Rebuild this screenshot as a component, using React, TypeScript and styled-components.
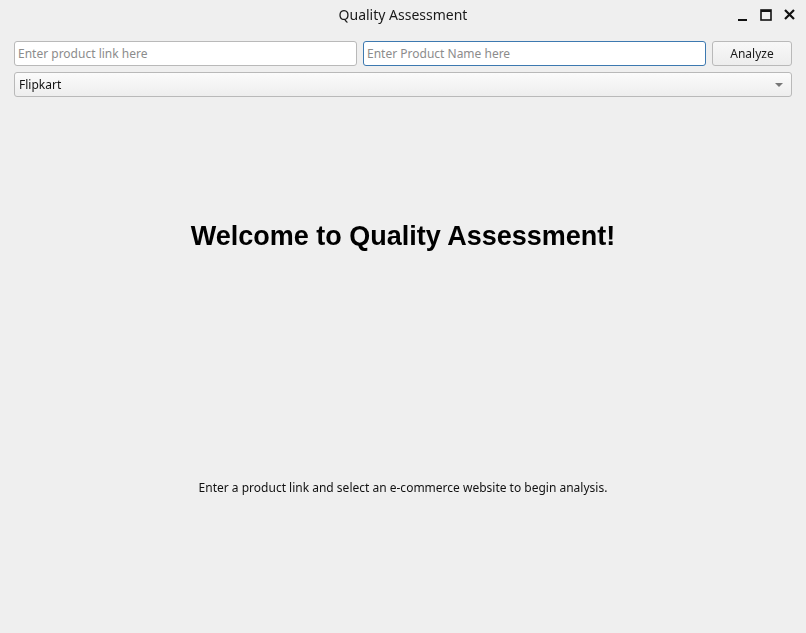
import React from "react";
import styled, { createGlobalStyle } from "styled-components";

const Global = createGlobalStyle`
  html, body { margin: 0; padding: 0; background: #efefef; }
  body { font-family: "Noto Sans", "Open Sans", sans-serif; }
  * { box-sizing: border-box; }
`;

const Window = styled.div`
  width: 806px;
  height: 633px;
  background: #efefef;
  display: flex;
  flex-direction: column;
  overflow: hidden;
`;

const TitleBar = styled.div`
  height: 30px;
  padding-bottom: 2px;
  display: flex;
  align-items: center;
  justify-content: center;
  position: relative;
  color: #1a1a1a;
  font-size: 14px;
`;

const Controls = styled.div`
  position: absolute;
  right: 10px;
  top: 8px;
  display: flex;
  gap: 11px;
  align-items: center;
`;

const Form = styled.div`
  padding: 11px 14px 0 14px;
  display: flex;
  flex-direction: column;
  gap: 6px;
`;

const Row = styled.div`
  display: flex;
  gap: 6px;
`;

const Input = styled.input<{ $focused?: boolean }>`
  flex: 1;
  min-width: 0;
  height: 25px;
  border: 1px solid ${(p) => (p.$focused ? "#3d79b0" : "#b9b9b9")};
  border-radius: 3px;
  background: #fff;
  font-family: "Noto Sans", sans-serif;
  font-size: 12px;
  padding: 0 3px;
  color: #222;
  outline: none;
  caret-color: #000;
  &::placeholder { color: #8c8c8c; }
`;

const Button = styled.button`
  width: 80px;
  height: 25px;
  border: 1px solid #b9b9b9;
  border-radius: 3px;
  background: linear-gradient(#f8f8f8, #ededed);
  font-family: "Noto Sans", sans-serif;
  font-size: 12px;
  color: #1a1a1a;
  padding: 0;
`;

const Combo = styled.div`
  height: 25px;
  border: 1px solid #b9b9b9;
  border-radius: 3px;
  background: linear-gradient(#fbfbfb, #eeeeee);
  display: flex;
  align-items: center;
  justify-content: space-between;
  padding: 0 8px 0 4px;
  font-size: 12px;
  color: #111;
`;

const Arrow = styled.span`
  width: 0;
  height: 0;
  border-left: 4px solid transparent;
  border-right: 4px solid transparent;
  border-top: 4px solid #777;
`;

const Body = styled.div`
  flex: 1;
  display: flex;
  flex-direction: column;
  align-items: center;
`;

const Heading = styled.h1`
  margin: 124px 0 0 0;
  font-family: "Liberation Sans", Arial, sans-serif;
  font-weight: bold;
  font-size: 27px;
  line-height: 30px;
  color: #000;
`;

const Sub = styled.p`
  margin: 228px 0 0 0;
  font-size: 12px;
  line-height: 18px;
  color: #111;
`;

export default function App() {
  return (
    <>
      <Global />
      <Window>
        <TitleBar>
          Quality Assessment
          <Controls>
            <svg width="12" height="12" viewBox="0 0 12 12">
              <rect x="1" y="10" width="9" height="2" fill="#111" />
            </svg>
            <svg width="12" height="12" viewBox="0 0 12 12">
              <rect x="1" y="1" width="10" height="10" fill="none" stroke="#111" strokeWidth="1.6" />
              <rect x="1" y="1" width="10" height="2" fill="#111" />
            </svg>
            <svg width="13" height="13" viewBox="0 0 13 13">
              <path d="M2 2 L11 11 M11 2 L2 11" stroke="#111" strokeWidth="2.2" />
            </svg>
          </Controls>
        </TitleBar>
        <Form>
          <Row>
            <Input placeholder="Enter product link here" />
            <Input $focused autoFocus placeholder="Enter Product Name here" />
            <Button>Analyze</Button>
          </Row>
          <Combo>
            <span>Flipkart</span>
            <Arrow />
          </Combo>
        </Form>
        <Body>
          <Heading>Welcome to Quality Assessment!</Heading>
          <Sub>Enter a product link and select an e-commerce website to begin analysis.</Sub>
        </Body>
      </Window>
    </>
  );
}
